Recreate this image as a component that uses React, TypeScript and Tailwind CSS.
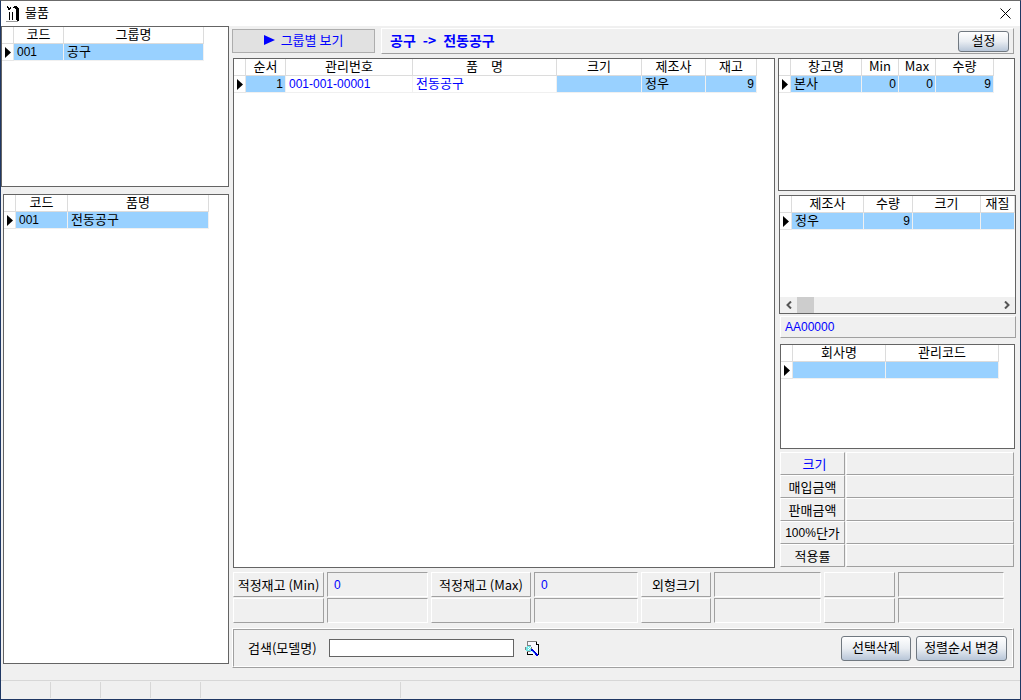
import React from 'react';
import clsx from 'clsx';

type Column = {
  title: string;
  width: string;
  align?: 'left' | 'right';
};

type Cell = {
  text: string;
  plain?: boolean;
  code?: boolean;
};

type DataGridProps = {
  label: string;
  columns: Column[];
  row: Cell[];
  className?: string;
  children?: React.ReactNode;
};

const groupColumns: Column[] = [
  { title: '코드', width: 'w-[50px]' },
  { title: '그룹명', width: 'w-[140px]' },
];

const productColumns: Column[] = [
  { title: '코드', width: 'w-[52px]' },
  { title: '품명', width: 'w-[141px]' },
];

const itemColumns: Column[] = [
  { title: '순서', width: 'w-[40px]', align: 'right' },
  { title: '관리번호', width: 'w-[127px]' },
  { title: '품\u2003명', width: 'w-[144px]' },
  { title: '크기', width: 'w-[85px]' },
  { title: '제조사', width: 'w-[64px]' },
  { title: '재고', width: 'w-[51px]', align: 'right' },
];

const warehouseColumns: Column[] = [
  { title: '창고명', width: 'w-[71px]' },
  { title: 'Min', width: 'w-[37px]', align: 'right' },
  { title: 'Max', width: 'w-[37px]', align: 'right' },
  { title: '수량', width: 'w-[58px]', align: 'right' },
];

const makerColumns: Column[] = [
  { title: '제조사', width: 'w-[72px]' },
  { title: '수량', width: 'w-[49px]', align: 'right' },
  { title: '크기', width: 'w-[68px]' },
  { title: '재질', width: 'w-[34px]' },
];

const companyColumns: Column[] = [
  { title: '회사명', width: 'w-[93px]' },
  { title: '관리코드', width: 'w-[113px]' },
];

const priceFields = ['크기', '매입금액', '판매금액', '100%단가', '적용률'];

const stockFields = [
  { label: '적정재고 (Min)', value: '0' },
  { label: '적정재고 (Max)', value: '0' },
  { label: '외형크기', value: '' },
  { label: '', value: '' },
  { label: '', value: '' },
  { label: '', value: '' },
  { label: '', value: '' },
  { label: '', value: '' },
];

const raised = 'border border-t-white border-l-white border-r-[#a0a0a0] border-b-[#a0a0a0]';
const sunken = 'border border-t-[#a0a0a0] border-l-[#a0a0a0] border-r-white border-b-white';
const codeText = "font-['Liberation_Sans',sans-serif] text-[12px]";

const DataGrid: React.FC<DataGridProps> = ({ label, columns, row, className, children }) => (
  <section className={clsx('flex flex-col border border-[#646464] bg-white', className)}>
    <table aria-label={label} className="w-0 table-fixed border-separate border-spacing-0">
      <thead>
        <tr>
          <th className="w-[12px] border-r border-b border-[#dcdcdc] p-0" />
          {columns.map((column) => (
            <th
              key={column.title}
              className={clsx(
                'h-[17px] border-r border-b border-[#dcdcdc] p-0 text-center align-top leading-[14px] font-normal whitespace-nowrap',
                column.width
              )}
            >
              {column.title}
            </th>
          ))}
        </tr>
      </thead>
      <tbody>
        <tr>
          <td className="border-r border-b border-[#e6e6e6] p-0">
            <svg width="6" height="11" viewBox="0 0 6 11" className="ml-[3px]">
              <path d="M0 0 L6 5.5 L0 11 Z" />
            </svg>
          </td>
          {columns.map((column, i) => (
            <td
              key={column.title}
              className={clsx(
                'h-[17px] border-r border-b border-[#f0f0f0] py-0 align-top leading-[14px] whitespace-nowrap',
                column.align === 'right' ? 'pr-[2px] pl-0 text-right' : 'pr-0 pl-[3px]',
                row[i].plain ? 'text-[#0000ff]' : 'bg-[#99d1ff]'
              )}
            >
              {row[i].code ? <span className={codeText}>{row[i].text}</span> : row[i].text}
            </td>
          ))}
        </tr>
      </tbody>
    </table>
    {children}
  </section>
);

const GlossyButton: React.FC<{ className?: string; children: React.ReactNode }> = ({ className, children }) => (
  <button
    type="button"
    className={clsx(
      'rounded-[3px] border border-[#707880] bg-linear-to-b from-white via-[#e9edf2] to-[#b8c6d8] leading-4 whitespace-nowrap',
      className
    )}
  >
    {children}
  </button>
);

const ToolsIcon = () => (
  <svg width="14" height="17" viewBox="0 0 14 17" shapeRendering="crispEdges">
    <path d="M1 1h1v1h1v1h1V2h1v2H4v1H2V3H1zM7 2h1V1h3v1h1v1h1v13h-2v-1h-1V4H9V3H7z" />
    <path d="M3.5 7v8M6.5 7v8" stroke="#000" fill="none" />
    <path d="M0 16.5h12" stroke="#999" />
  </svg>
);

const SearchIcon = () => (
  <svg width="15" height="17" viewBox="0 0 15 17" shapeRendering="crispEdges">
    <path d="M2 1h9l3 3v11H2z" fill="#f8f8ff" />
    <path d="M2.5 5V1.5h9" fill="none" stroke="#808080" />
    <path d="M11.5 2v2.5h2v10H10M2.5 12v2.5H8" fill="none" stroke="#000" />
    <path d="M2 6h4v1h1v4H6v1H2v-1H1V7h1z" fill="#6fe8e8" />
    <path d="M2 5.5h4M2 11.5h3M0.5 7v3M6.5 7v2" stroke="#808080" />
    <path d="M3 7h1v1H3zM4 8h1v1H4zM3 9h1v1H3zM5 7h1v1H5z" fill="#fff" />
    <path d="M6 9h2v1h1v1h1v1h1v1h1v1h1v2h-2v-1h-1v-1H9v-1H8v-1H7v-1H6z" fill="#0000e0" />
    <path d="M7 11h1v1H7zM8 12h1v1H8zM9 13h1v1H9z" fill="#59b8ff" />
  </svg>
);

const App: React.FC = () => {
  return (
    <div className="flex min-h-screen flex-col border border-t-[#6b6b6b] border-r-[#1f3864] border-b-[#1f3864] border-l-[#1f3864] bg-[#f0f0f0] font-['Noto_Sans_CJK_KR',sans-serif] text-[13px] leading-4 text-black">
      {/* Title bar */}
      <header className="flex h-[25px] shrink-0 items-center justify-between bg-white pr-2 pl-[5px]">
        <div className="flex items-center gap-[5px]">
          <ToolsIcon />
          <h1 className="pb-1">물품</h1>
        </div>
        <button type="button" aria-label="닫기" className="p-px">
          <svg width="11" height="11" viewBox="0 0 11 11">
            <path d="M0.5 0.5l10 10M10.5 0.5l-10 10" stroke="#000" />
          </svg>
        </button>
      </header>

      <div className="flex flex-1">
        {/* Groups and products */}
        <aside className="flex w-[228px] shrink-0 flex-col gap-[7px] pb-4">
          <DataGrid
            label="그룹"
            columns={groupColumns}
            row={[{ text: '001', code: true }, { text: '공구' }]}
            className="h-[161px]"
          />
          <DataGrid
            label="품명"
            columns={productColumns}
            row={[{ text: '001', code: true }, { text: '전동공구' }]}
            className="ml-0.5 flex-1"
          />
        </aside>

        <main className="flex min-w-0 flex-1 flex-col pt-0.5 pr-1 pl-[3px]">
          {/* Toolbar */}
          <div className="mr-0.5 flex h-[26px] items-center gap-1.5">
            <button
              type="button"
              className="flex h-6 w-[143px] items-center justify-center gap-1.5 border border-[#adadad] bg-[#e1e1e1] pb-0.5 text-[#0000ff]"
            >
              <svg width="11" height="10" viewBox="0 0 11 10" fill="#0000ff">
                <path d="M0 0 L11 5 L0 10 Z" />
              </svg>
              그룹별 보기
            </button>
            <div className={clsx('flex h-full flex-1 items-center justify-between pr-1 pl-2', raised)}>
              <span className="pb-0.5 text-[14px] font-bold text-[#0000ff]">공구{'\u2002'}-&gt;{'\u2002'}전동공구</span>
              <GlossyButton className="h-[21px] w-[51px] pb-0.5">설정</GlossyButton>
            </div>
          </div>

          <div className="mt-1 flex flex-1 gap-[3px] pl-px">
            <DataGrid
              label="물품 목록"
              columns={itemColumns}
              row={[
                { text: '1', code: true },
                { text: '001-001-00001', plain: true, code: true },
                { text: '전동공구', plain: true },
                { text: '' },
                { text: '정우' },
                { text: '9', code: true },
              ]}
              className="min-w-0 flex-1"
            />

            {/* Stock details */}
            <div className="flex w-[238px] shrink-0 flex-col">
              <DataGrid
                label="창고"
                columns={warehouseColumns}
                row={[
                  { text: '본사' },
                  { text: '0', code: true },
                  { text: '0', code: true },
                  { text: '9', code: true },
                ]}
                className="mr-px h-[133px]"
              />
              <DataGrid
                label="제조사"
                columns={makerColumns}
                row={[{ text: '정우' }, { text: '9', code: true }, { text: '' }, { text: '' }]}
                className="mt-1 ml-px h-[119px]"
              >
                <div className="mt-auto flex h-4 items-center bg-[#f0f0f0]">
                  <button type="button" aria-label="왼쪽" className="flex w-[17px] justify-center">
                    <svg width="6" height="8" viewBox="0 0 6 8" fill="none" stroke="#555" strokeWidth="2">
                      <path d="M5 0.5L1.5 4L5 7.5" />
                    </svg>
                  </button>
                  <div className="h-full w-[17px] bg-[#cdcdcd]" />
                  <button type="button" aria-label="오른쪽" className="ml-auto flex w-[17px] justify-center">
                    <svg width="6" height="8" viewBox="0 0 6 8" fill="none" stroke="#555" strokeWidth="2">
                      <path d="M1 0.5L4.5 4L1 7.5" />
                    </svg>
                  </button>
                </div>
              </DataGrid>
              <div className={clsx('mt-0.5 ml-0.5 flex h-[22px] items-center px-1 text-[#0000ff]', raised)}>
                <span className={codeText}>AA00000</span>
              </div>
              <DataGrid
                label="회사"
                columns={companyColumns}
                row={[{ text: '' }, { text: '' }]}
                className="mt-1.5 mr-px ml-0.5 min-h-[104px] flex-1"
              />
              <dl className="mt-[3px] mr-0.5 mb-px ml-0.5">
                {priceFields.map((field, i) => (
                  <div key={field} className="flex h-[23px] gap-px">
                    <dt
                      className={clsx(
                        'flex w-[65px] items-center justify-center whitespace-nowrap',
                        raised,
                        i === 0 && 'pl-1 text-[#0000ff]'
                      )}
                    >
                      {field.startsWith('100%') ? (
                        <>
                          <span className={codeText}>100%</span>
                          {field.slice(4)}
                        </>
                      ) : (
                        field
                      )}
                    </dt>
                    <dd className={clsx('flex-1', raised)} />
                  </div>
                ))}
              </dl>
            </div>
          </div>

          {/* Stock limits */}
          <dl className="mt-1 mr-3 ml-px grid grid-cols-[91fr_101fr_100fr_104fr_70fr_107fr_71fr_106fr] gap-x-[3px] gap-y-px">
            {stockFields.map((field, i) => (
              <div key={i} className="contents">
                <dt className={clsx('flex h-[25px] items-center justify-center whitespace-nowrap', raised)}>
                  {field.label}
                </dt>
                <dd className={clsx('flex h-[25px] items-center px-1.5 text-[#0000ff]', sunken)}>
                  <span className={codeText}>{field.value}</span>
                </dd>
              </div>
            ))}
          </dl>

          {/* Search */}
          <div className={clsx('mt-[5px] mr-0.5 mb-3', raised)}>
            <form className={clsx('flex h-[38px] items-center pr-[5px] pl-3.5', sunken)}>
              <label htmlFor="model" className="w-[81px]">
                검색(모델명)
              </label>
              <input id="model" type="text" className="h-[18px] w-[185px] border border-[#646464] bg-white px-1" />
              <button type="button" aria-label="검색" className="ml-[11px]">
                <SearchIcon />
              </button>
              <div className="ml-auto flex gap-[5px]">
                <GlossyButton className="h-[25px] w-[70px] pb-0.5">선택삭제</GlossyButton>
                <GlossyButton className="h-[25px] w-[91px] pb-0.5">정렬순서 변경</GlossyButton>
              </div>
            </form>
          </div>
        </main>
      </div>

      {/* Status bar */}
      <footer className="flex h-[19px] shrink-0 border-t border-[#d7d7d7] py-px">
        <div className="w-[50px] border-r border-[#d7d7d7]" />
        <div className="w-[50px] border-r border-[#d7d7d7]" />
        <div className="w-[50px] border-r border-[#d7d7d7]" />
        <div className="w-[50px] border-r border-[#d7d7d7]" />
        <div className="w-[200px] border-r border-[#d7d7d7]" />
      </footer>
    </div>
  );
};

export default App;
